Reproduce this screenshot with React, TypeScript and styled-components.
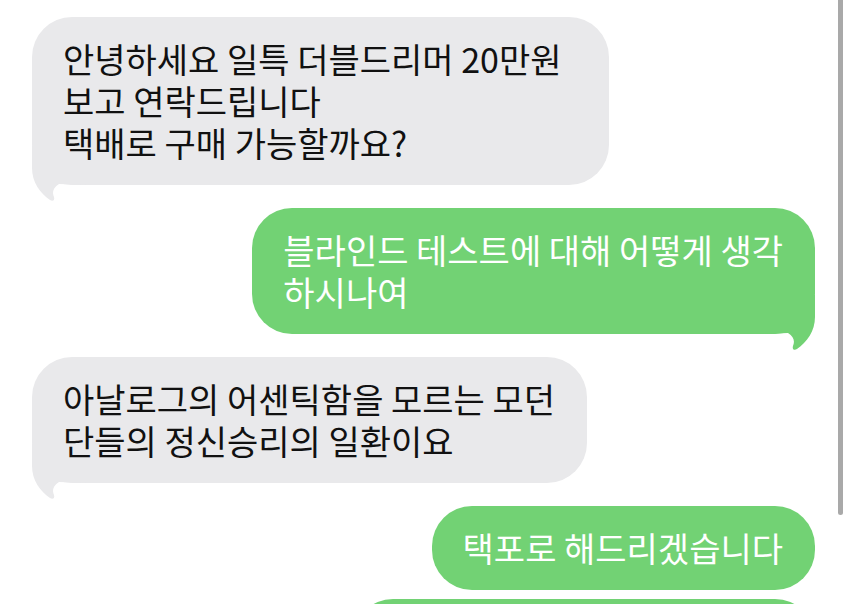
import React from "react";
import styled, { createGlobalStyle } from "styled-components";

const GlobalStyle = createGlobalStyle`
  html, body {
    margin: 0;
    padding: 0;
    background: #ffffff;
    overflow: hidden;
  }
`;

const GREY = "#e9e9eb";
const GREEN = "#72d274";

const Screen = styled.div`
  position: relative;
  width: 850px;
  height: 604px;
  overflow: hidden;
  box-sizing: border-box;
  padding: 17px 35px 0 32px;
  display: flex;
  flex-direction: column;
  background: #ffffff;
  font-family: "Noto Sans CJK KR", sans-serif;
`;

const Row = styled.div<{ $mine?: boolean; $gap: number }>`
  display: flex;
  justify-content: ${(p) => (p.$mine ? "flex-end" : "flex-start")};
  margin-top: ${(p) => p.$gap}px;
  flex-shrink: 0;
`;

const Bubble = styled.div<{ $mine?: boolean; $width?: number }>`
  position: relative;
  isolation: isolate;
  box-sizing: border-box;
  width: ${(p) => (p.$width ? `${p.$width}px` : "auto")};
  min-height: 84px;
  padding: 21px 32px 21px 31px;
  border-radius: 40px;
  background: ${(p) => (p.$mine ? GREEN : GREY)};
  color: ${(p) => (p.$mine ? "#ffffff" : "#111111")};
  font-size: 34px;
  line-height: 42px;
  white-space: nowrap;
`;

const Line = styled.div`
  min-height: 42px;
`;

const Tail = styled.svg<{ $mine?: boolean }>`
  position: absolute;
  z-index: -1;
  bottom: -17px;
  ${(p) => (p.$mine ? "right: 0;" : "left: 0;")}
  transform: ${(p) => (p.$mine ? "scaleX(-1)" : "none")};
  width: 56px;
  height: 56px;
  overflow: visible;
`;

const Scrollbar = styled.div`
  position: absolute;
  top: 0;
  left: 838px;
  width: 5px;
  height: 515px;
  border-radius: 0 0 3px 3px;
  background: #a9a9a9;
`;

function BubbleTail({ mine, color }: { mine?: boolean; color: string }) {
  return (
    <Tail $mine={mine} viewBox="0 0 56 56">
      <path
        d="M0 0 L0 22 C0 36 8 47 18 54 C21 56 23 54 22 51 C20 46 21 42 27 38 L56 39 L56 0 Z"
        fill={color}
      />
    </Tail>
  );
}

type Message = {
  mine?: boolean;
  lines: string[];
  gap: number;
  tail?: boolean;
  width?: number;
};

const messages: Message[] = [
  {
    lines: ["안녕하세요 일특 더블드리머 20만원", "보고 연락드립니다", "택배로 구매 가능할까요?"],
    gap: 0,
    tail: true,
    width: 577,
  },
  {
    mine: true,
    lines: ["블라인드 테스트에 대해 어떻게 생각", "하시나여"],
    gap: 23,
    tail: true,
  },
  {
    lines: ["아날로그의 어센틱함을 모르는 모던", "단들의 정신승리의 일환이요"],
    gap: 23,
    tail: true,
  },
  {
    mine: true,
    lines: ["택포로 해드리겠습니다"],
    gap: 23,
  },
  {
    mine: true,
    lines: [],
    gap: 9,
    width: 462,
  },
];

export default function App() {
  return (
    <>
      <GlobalStyle />
      <Screen>
        {messages.map((m, i) => (
          <Row key={i} $mine={m.mine} $gap={m.gap}>
            <Bubble $mine={m.mine} $width={m.width}>
              {m.lines.map((line, j) => (
                <Line key={j}>{line}</Line>
              ))}
              {m.tail ? <BubbleTail mine={m.mine} color={m.mine ? GREEN : GREY} /> : null}
            </Bubble>
          </Row>
        ))}
        <Scrollbar />
      </Screen>
    </>
  );
}
